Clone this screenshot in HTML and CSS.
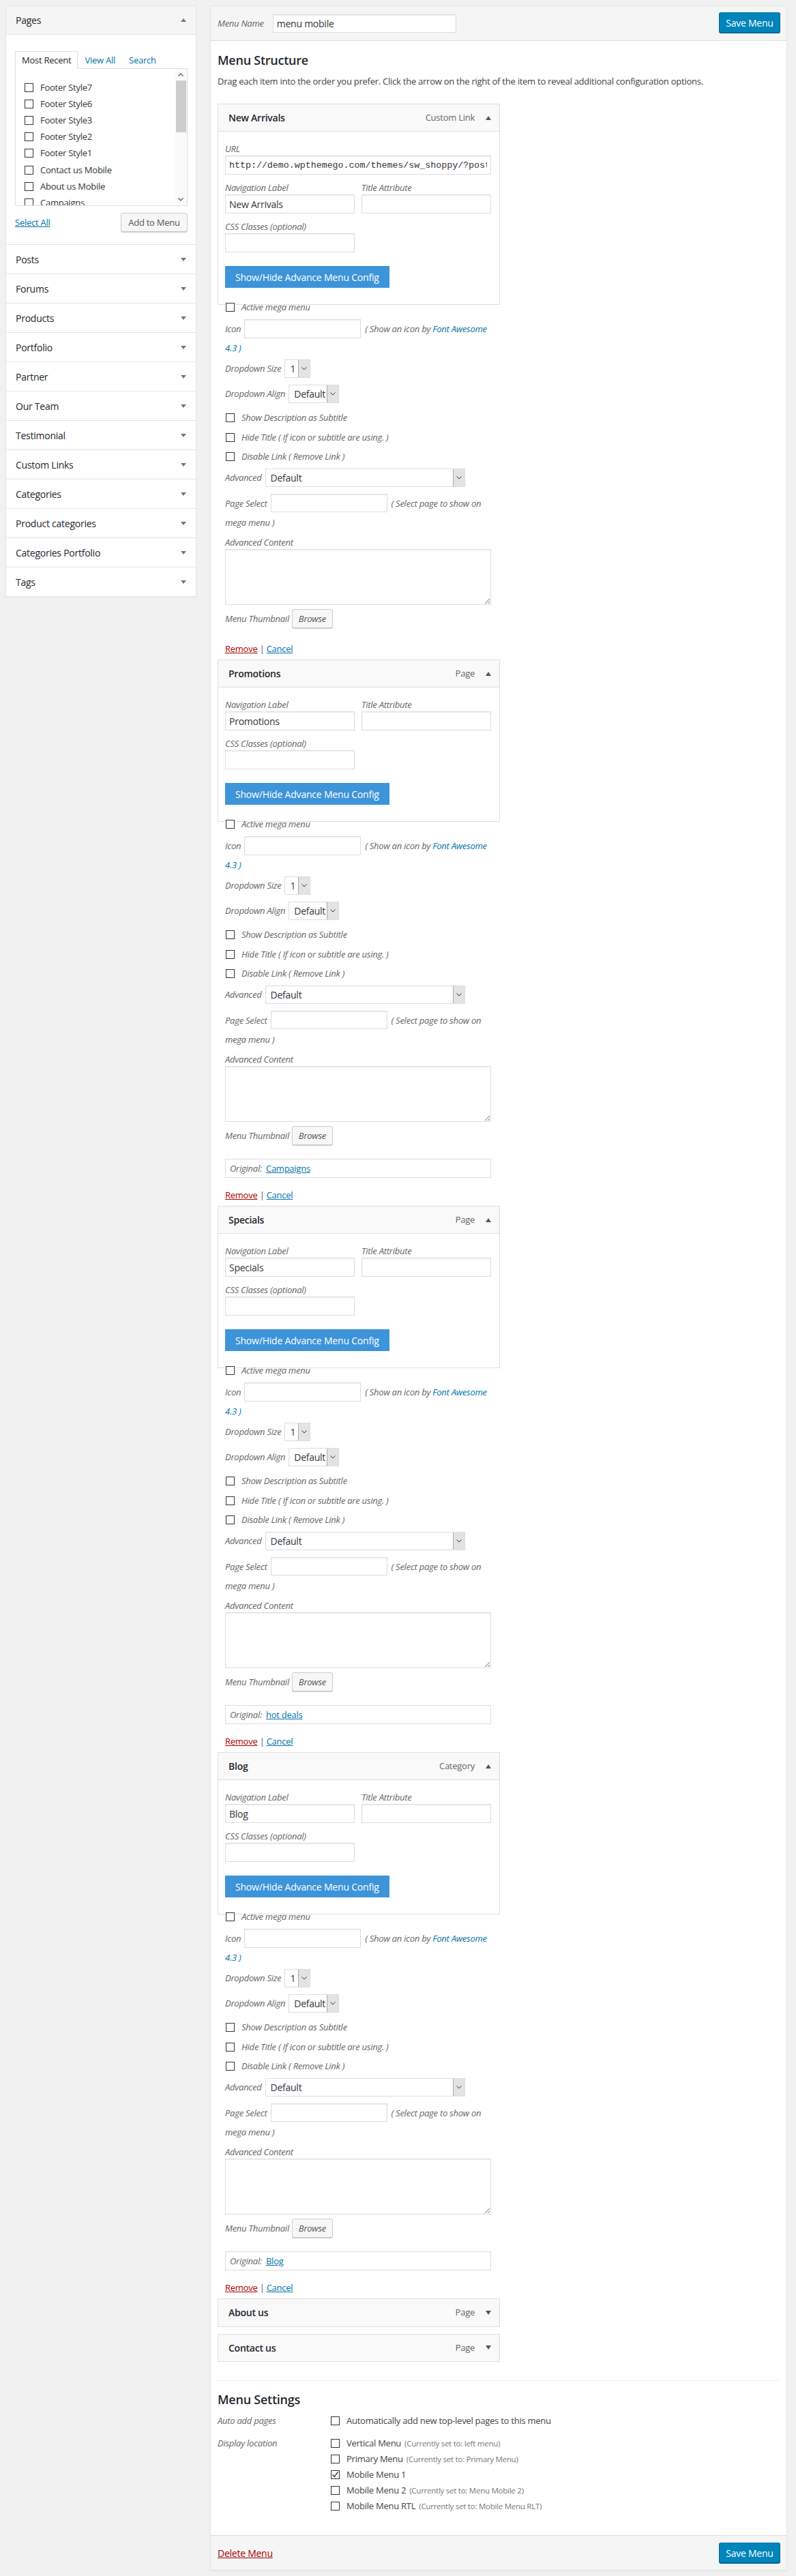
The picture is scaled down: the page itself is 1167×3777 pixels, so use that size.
FILE: index.html
```html
<!DOCTYPE html>
<html lang="en">
<head>
<meta charset="utf-8">
<title>Menus</title>
<link rel="stylesheet" href="styles.css">
</head>
<body>
<div class="wrap">
  <aside class="side">
    <section class="acc open">
      <div class="acc-h"><span>Pages</span><i class="tri up"></i></div>
      <div class="acc-b">
        <ul class="tabs">
          <li class="on">Most Recent</li>
          <li><a href="#">View All</a></li>
          <li><a href="#">Search</a></li>
        </ul>
        <div class="plist">
          <ul class="pitems">
            <li><span class="cb"></span>Footer Style7</li>
            <li><span class="cb"></span>Footer Style6</li>
            <li><span class="cb"></span>Footer Style3</li>
            <li><span class="cb"></span>Footer Style2</li>
            <li><span class="cb"></span>Footer Style1</li>
            <li><span class="cb"></span>Contact us Mobile</li>
            <li><span class="cb"></span>About us Mobile</li>
            <li><span class="cb"></span>Campaigns</li>
          </ul>
          <div class="sbar">
            <span class="sb-btn"><svg width="8" height="5" viewBox="0 0 8 5"><polyline points="0.5,4.5 4,1 7.5,4.5" fill="none" stroke="#555" stroke-width="1.2"/></svg></span>
            <span class="sb-thumb"></span>
            <span class="sb-fill"></span>
            <span class="sb-btn"><svg width="8" height="5" viewBox="0 0 8 5"><polyline points="0.5,0.5 4,4 7.5,0.5" fill="none" stroke="#555" stroke-width="1.2"/></svg></span>
          </div>
        </div>
        <div class="pact">
          <a href="#" class="selall">Select All</a>
          <button class="btn2">Add to Menu</button>
        </div>
      </div>
    </section>
    <section class="acc"><div class="acc-h"><span>Posts</span><i class="tri dn"></i></div></section>
    <section class="acc"><div class="acc-h"><span>Forums</span><i class="tri dn"></i></div></section>
    <section class="acc"><div class="acc-h"><span>Products</span><i class="tri dn"></i></div></section>
    <section class="acc"><div class="acc-h"><span>Portfolio</span><i class="tri dn"></i></div></section>
    <section class="acc"><div class="acc-h"><span>Partner</span><i class="tri dn"></i></div></section>
    <section class="acc"><div class="acc-h"><span>Our Team</span><i class="tri dn"></i></div></section>
    <section class="acc"><div class="acc-h"><span>Testimonial</span><i class="tri dn"></i></div></section>
    <section class="acc"><div class="acc-h"><span>Custom Links</span><i class="tri dn"></i></div></section>
    <section class="acc"><div class="acc-h"><span>Categories</span><i class="tri dn"></i></div></section>
    <section class="acc"><div class="acc-h"><span>Product categories</span><i class="tri dn"></i></div></section>
    <section class="acc"><div class="acc-h"><span>Categories Portfolio</span><i class="tri dn"></i></div></section>
    <section class="acc last"><div class="acc-h"><span>Tags</span><i class="tri dn"></i></div></section>
  </aside>

  <main class="menu">
    <header class="mh">
      <div class="mname"><label class="lbi">Menu Name</label><input class="txt nm" value="menu mobile"></div>
      <button class="save">Save Menu</button>
    </header>

    <div class="mb">
      <h3 class="h3">Menu Structure</h3>
      <p class="desc">Drag each item into the order you prefer. Click the arrow on the right of the item to reveal additional configuration options.</p>

      <ul class="mitems">
        <!-- New Arrivals -->
        <li class="mi">
          <div class="item">
            <div class="ih"><span class="it">New Arrivals</span><span class="ity">Custom Link</span><i class="tri up2"></i></div>
            <div class="ib">
              <label class="lbi blk">URL</label>
              <input class="txt full mono" value="http://demo.wpthemego.com/themes/sw_shoppy/?post_type=product&amp;product_cat=new">
              <div class="two">
                <div><label class="lbi blk">Navigation Label</label><input class="txt half" value="New Arrivals"></div>
                <div><label class="lbi blk">Title Attribute</label><input class="txt half"></div>
              </div>
              <label class="lbi blk mt10">CSS Classes (optional)</label>
              <input class="txt half">
              <button class="bbtn">Show/Hide Advance Menu Config</button>
            </div>
          </div>
          <div class="adv">
            <div class="rchk"><span class="cb"></span><span class="lbi">Active mega menu</span></div>
            <p class="ricon"><span class="lbi">Icon</span><input class="txt sm"><span class="lbi">( Show an icon by <a href="#">Font Awesome</a></span><br><a href="#" class="lbi">4.3 )</a></p>
            <div class="rsel r1"><span class="lbi">Dropdown Size</span><span class="sel s-size"><span class="sv">1</span><span class="sa"><svg width="8" height="5" viewBox="0 0 8 5"><polyline points="0.5,0.5 4,4 7.5,0.5" fill="none" stroke="#333" stroke-width="1"/></svg></span></span></div>
            <div class="rsel r2"><span class="lbi">Dropdown Align</span><span class="sel s-align"><span class="sv">Default</span><span class="sa"><svg width="8" height="5" viewBox="0 0 8 5"><polyline points="0.5,0.5 4,4 7.5,0.5" fill="none" stroke="#333" stroke-width="1"/></svg></span></span></div>
            <div class="rchk c1"><span class="cb"></span><span class="lbi">Show Description as Subtitle</span></div>
            <div class="rchk c2"><span class="cb"></span><span class="lbi">Hide Title ( If icon or subtitle are using. )</span></div>
            <div class="rchk c2"><span class="cb"></span><span class="lbi">Disable Link ( Remove Link )</span></div>
            <div class="rsel r3"><span class="lbi">Advanced</span><span class="sel s-adv"><span class="sv">Default</span><span class="sa"><svg width="8" height="5" viewBox="0 0 8 5"><polyline points="0.5,0.5 4,4 7.5,0.5" fill="none" stroke="#333" stroke-width="1"/></svg></span></span></div>
            <p class="rpage"><span class="lbi">Page Select</span><input class="txt sm"><span class="lbi">( Select page to show on</span><br><span class="lbi">mega menu )</span></p>
            <label class="lbi blk ract">Advanced Content</label>
            <textarea class="ta"></textarea>
            <div class="rthumb"><span class="lbi">Menu Thumbnail</span><button class="btn2 bi">Browse</button></div>
            <div class="ract2 noorig"><a href="#" class="rm">Remove</a> <span class="sep">|</span> <a href="#" class="cc">Cancel</a></div>
          </div>
        </li>

        <!-- Promotions -->
        <li class="mi">
          <div class="item">
            <div class="ih"><span class="it">Promotions</span><span class="ity">Page</span><i class="tri up2"></i></div>
            <div class="ib">
              <div class="two">
                <div><label class="lbi blk">Navigation Label</label><input class="txt half" value="Promotions"></div>
                <div><label class="lbi blk">Title Attribute</label><input class="txt half"></div>
              </div>
              <label class="lbi blk mt10">CSS Classes (optional)</label>
              <input class="txt half">
              <button class="bbtn">Show/Hide Advance Menu Config</button>
            </div>
          </div>
          <div class="adv">
            <div class="rchk"><span class="cb"></span><span class="lbi">Active mega menu</span></div>
            <p class="ricon"><span class="lbi">Icon</span><input class="txt sm"><span class="lbi">( Show an icon by <a href="#">Font Awesome</a></span><br><a href="#" class="lbi">4.3 )</a></p>
            <div class="rsel r1"><span class="lbi">Dropdown Size</span><span class="sel s-size"><span class="sv">1</span><span class="sa"><svg width="8" height="5" viewBox="0 0 8 5"><polyline points="0.5,0.5 4,4 7.5,0.5" fill="none" stroke="#333" stroke-width="1"/></svg></span></span></div>
            <div class="rsel r2"><span class="lbi">Dropdown Align</span><span class="sel s-align"><span class="sv">Default</span><span class="sa"><svg width="8" height="5" viewBox="0 0 8 5"><polyline points="0.5,0.5 4,4 7.5,0.5" fill="none" stroke="#333" stroke-width="1"/></svg></span></span></div>
            <div class="rchk c1"><span class="cb"></span><span class="lbi">Show Description as Subtitle</span></div>
            <div class="rchk c2"><span class="cb"></span><span class="lbi">Hide Title ( If icon or subtitle are using. )</span></div>
            <div class="rchk c2"><span class="cb"></span><span class="lbi">Disable Link ( Remove Link )</span></div>
            <div class="rsel r3"><span class="lbi">Advanced</span><span class="sel s-adv"><span class="sv">Default</span><span class="sa"><svg width="8" height="5" viewBox="0 0 8 5"><polyline points="0.5,0.5 4,4 7.5,0.5" fill="none" stroke="#333" stroke-width="1"/></svg></span></span></div>
            <p class="rpage"><span class="lbi">Page Select</span><input class="txt sm"><span class="lbi">( Select page to show on</span><br><span class="lbi">mega menu )</span></p>
            <label class="lbi blk ract">Advanced Content</label>
            <textarea class="ta"></textarea>
            <div class="rthumb"><span class="lbi">Menu Thumbnail</span><button class="btn2 bi">Browse</button></div>
            <div class="orig"><span class="lbi">Original:</span> <a href="#">Campaigns</a></div>
            <div class="ract2"><a href="#" class="rm">Remove</a> <span class="sep">|</span> <a href="#" class="cc">Cancel</a></div>
          </div>
        </li>

        <!-- Specials -->
        <li class="mi">
          <div class="item">
            <div class="ih"><span class="it">Specials</span><span class="ity">Page</span><i class="tri up2"></i></div>
            <div class="ib">
              <div class="two">
                <div><label class="lbi blk">Navigation Label</label><input class="txt half" value="Specials"></div>
                <div><label class="lbi blk">Title Attribute</label><input class="txt half"></div>
              </div>
              <label class="lbi blk mt10">CSS Classes (optional)</label>
              <input class="txt half">
              <button class="bbtn">Show/Hide Advance Menu Config</button>
            </div>
          </div>
          <div class="adv">
            <div class="rchk"><span class="cb"></span><span class="lbi">Active mega menu</span></div>
            <p class="ricon"><span class="lbi">Icon</span><input class="txt sm"><span class="lbi">( Show an icon by <a href="#">Font Awesome</a></span><br><a href="#" class="lbi">4.3 )</a></p>
            <div class="rsel r1"><span class="lbi">Dropdown Size</span><span class="sel s-size"><span class="sv">1</span><span class="sa"><svg width="8" height="5" viewBox="0 0 8 5"><polyline points="0.5,0.5 4,4 7.5,0.5" fill="none" stroke="#333" stroke-width="1"/></svg></span></span></div>
            <div class="rsel r2"><span class="lbi">Dropdown Align</span><span class="sel s-align"><span class="sv">Default</span><span class="sa"><svg width="8" height="5" viewBox="0 0 8 5"><polyline points="0.5,0.5 4,4 7.5,0.5" fill="none" stroke="#333" stroke-width="1"/></svg></span></span></div>
            <div class="rchk c1"><span class="cb"></span><span class="lbi">Show Description as Subtitle</span></div>
            <div class="rchk c2"><span class="cb"></span><span class="lbi">Hide Title ( If icon or subtitle are using. )</span></div>
            <div class="rchk c2"><span class="cb"></span><span class="lbi">Disable Link ( Remove Link )</span></div>
            <div class="rsel r3"><span class="lbi">Advanced</span><span class="sel s-adv"><span class="sv">Default</span><span class="sa"><svg width="8" height="5" viewBox="0 0 8 5"><polyline points="0.5,0.5 4,4 7.5,0.5" fill="none" stroke="#333" stroke-width="1"/></svg></span></span></div>
            <p class="rpage"><span class="lbi">Page Select</span><input class="txt sm"><span class="lbi">( Select page to show on</span><br><span class="lbi">mega menu )</span></p>
            <label class="lbi blk ract">Advanced Content</label>
            <textarea class="ta"></textarea>
            <div class="rthumb"><span class="lbi">Menu Thumbnail</span><button class="btn2 bi">Browse</button></div>
            <div class="orig"><span class="lbi">Original:</span> <a href="#">hot deals</a></div>
            <div class="ract2"><a href="#" class="rm">Remove</a> <span class="sep">|</span> <a href="#" class="cc">Cancel</a></div>
          </div>
        </li>

        <!-- Blog -->
        <li class="mi">
          <div class="item">
            <div class="ih"><span class="it">Blog</span><span class="ity">Category</span><i class="tri up2"></i></div>
            <div class="ib">
              <div class="two">
                <div><label class="lbi blk">Navigation Label</label><input class="txt half" value="Blog"></div>
                <div><label class="lbi blk">Title Attribute</label><input class="txt half"></div>
              </div>
              <label class="lbi blk mt10">CSS Classes (optional)</label>
              <input class="txt half">
              <button class="bbtn">Show/Hide Advance Menu Config</button>
            </div>
          </div>
          <div class="adv">
            <div class="rchk"><span class="cb"></span><span class="lbi">Active mega menu</span></div>
            <p class="ricon"><span class="lbi">Icon</span><input class="txt sm"><span class="lbi">( Show an icon by <a href="#">Font Awesome</a></span><br><a href="#" class="lbi">4.3 )</a></p>
            <div class="rsel r1"><span class="lbi">Dropdown Size</span><span class="sel s-size"><span class="sv">1</span><span class="sa"><svg width="8" height="5" viewBox="0 0 8 5"><polyline points="0.5,0.5 4,4 7.5,0.5" fill="none" stroke="#333" stroke-width="1"/></svg></span></span></div>
            <div class="rsel r2"><span class="lbi">Dropdown Align</span><span class="sel s-align"><span class="sv">Default</span><span class="sa"><svg width="8" height="5" viewBox="0 0 8 5"><polyline points="0.5,0.5 4,4 7.5,0.5" fill="none" stroke="#333" stroke-width="1"/></svg></span></span></div>
            <div class="rchk c1"><span class="cb"></span><span class="lbi">Show Description as Subtitle</span></div>
            <div class="rchk c2"><span class="cb"></span><span class="lbi">Hide Title ( If icon or subtitle are using. )</span></div>
            <div class="rchk c2"><span class="cb"></span><span class="lbi">Disable Link ( Remove Link )</span></div>
            <div class="rsel r3"><span class="lbi">Advanced</span><span class="sel s-adv"><span class="sv">Default</span><span class="sa"><svg width="8" height="5" viewBox="0 0 8 5"><polyline points="0.5,0.5 4,4 7.5,0.5" fill="none" stroke="#333" stroke-width="1"/></svg></span></span></div>
            <p class="rpage"><span class="lbi">Page Select</span><input class="txt sm"><span class="lbi">( Select page to show on</span><br><span class="lbi">mega menu )</span></p>
            <label class="lbi blk ract">Advanced Content</label>
            <textarea class="ta"></textarea>
            <div class="rthumb"><span class="lbi">Menu Thumbnail</span><button class="btn2 bi">Browse</button></div>
            <div class="orig"><span class="lbi">Original:</span> <a href="#">Blog</a></div>
            <div class="ract2"><a href="#" class="rm">Remove</a> <span class="sep">|</span> <a href="#" class="cc">Cancel</a></div>
          </div>
        </li>

        <li class="mi">
          <div class="item closed">
            <div class="ih"><span class="it">About us</span><span class="ity">Page</span><i class="tri dn2"></i></div>
          </div>
        </li>
        <li class="mi">
          <div class="item closed">
            <div class="ih"><span class="it">Contact us</span><span class="ity">Page</span><i class="tri dn2"></i></div>
          </div>
        </li>
      </ul>

      <div class="settings">
        <h3 class="h3">Menu Settings</h3>
        <div class="srow auto">
          <div class="slab lbi">Auto add pages</div>
          <div class="sopts">
            <div class="opt"><span class="cb"></span>Automatically add new top-level pages to this menu</div>
          </div>
        </div>
        <div class="srow disp">
          <div class="slab lbi">Display location</div>
          <div class="sopts">
            <div class="opt"><span class="cb"></span>Vertical Menu <small>(Currently set to: left menu)</small></div>
            <div class="opt"><span class="cb"></span>Primary Menu <small>(Currently set to: Primary Menu)</small></div>
            <div class="opt"><span class="cb on"><svg width="11" height="11" viewBox="0 0 11 11"><polyline points="1.5,5.5 4,8.5 9.5,1.5" fill="none" stroke="#333" stroke-width="1.4"/></svg></span>Mobile Menu 1</div>
            <div class="opt"><span class="cb"></span>Mobile Menu 2 <small>(Currently set to: Menu Mobile 2)</small></div>
            <div class="opt"><span class="cb"></span>Mobile Menu RTL <small>(Currently set to: Mobile Menu RLT)</small></div>
          </div>
        </div>
      </div>
    </div>

    <footer class="mf">
      <a href="#" class="del">Delete Menu</a>
      <button class="save">Save Menu</button>
    </footer>
  </main>
</div>
</body>
</html>
```

FILE: styles.css
```css
* { box-sizing: border-box; }
html, body { margin: 0; padding: 0; }
body {
  background: #f1f1f1;
  font-family: "Open Sans", "Noto Sans", sans-serif;
  font-size: 13px;
  line-height: 19px;
  color: #444;
  letter-spacing: -0.25px;
}
a { color: #0073aa; }
ul { list-style: none; margin: 0; padding: 0; }
p { margin: 0; }
button, input, textarea { font-family: inherit; letter-spacing: inherit; }

.wrap {
  display: flex;
  align-items: flex-start;
  gap: 20px;
  padding: 8px 13px 15px 8px;
}

/* ---------- Sidebar ---------- */
.side {
  flex: none;
  width: 280px;
  background: #fff;
  border: 1px solid #e5e5e5;
  box-shadow: 0 1px 1px rgba(0,0,0,.04);
}
.acc { border-bottom: 1px solid #e5e5e5; }
.acc.last { border-bottom: 0; }
.acc-h {
  height: 42px;
  display: flex;
  align-items: center;
  justify-content: space-between;
  padding: 0 14px 0 14px;
  font-size: 14px;
  color: #23282d;
}
.acc.open .acc-h {
  box-sizing: content-box;
  height: 41px;
  background: #f5f5f5;
  border-bottom: 1px solid #e5e5e5;
}
.tri { display: block; width: 0; height: 0; border-left: 4px solid transparent; border-right: 4px solid transparent; }
.tri.dn { border-top: 5px solid #72777c; }
.tri.up { border-bottom: 5px solid #72777c; }
.tri.up2 { border-bottom: 6px solid #555; }
.tri.dn2 { border-top: 6px solid #555; }

.acc-b { padding: 24px 12px 18px 13px; }
.tabs { display: flex; height: 25px; }
.tabs li {
  padding: 0 9px;
  line-height: 25px;
  height: 25px;
  border: 1px solid transparent;
  border-bottom: 0;
}
.tabs li a { text-decoration: none; }
.tabs li.on {
  position: relative;
  z-index: 1;
  background: #fff;
  border-color: #ddd;
  height: 26px;
  color: #23282d;
}
.plist {
  display: flex;
  height: 202px;
  border: 1px solid #ddd;
  background: #fff;
  overflow: hidden;
}
.pitems {
  flex: 1;
  padding: 15px 0 0 13px;
  overflow: hidden;
}
.pitems li {
  display: flex;
  align-items: center;
  height: 24.2px;
  color: #32373c;
}
.cb {
  flex: none;
  display: inline-flex;
  align-items: center;
  justify-content: center;
  width: 13px;
  height: 13px;
  border: 1px solid #333;
  background: #fff;
}
.pitems .cb { margin-right: 10px; }
.sbar {
  flex: none;
  width: 17px;
  display: flex;
  flex-direction: column;
  align-items: center;
  background: #fafafa;
  padding: 0 1px 0 0;
}
.sb-btn { height: 17px; width: 15px; display: flex; align-items: center; justify-content: center; }
.sb-thumb { width: 15px; height: 76px; background: #cdcdcd; }
.sb-fill { flex: 1; }

.pact {
  display: flex;
  justify-content: space-between;
  align-items: center;
  margin-top: 10px;
}
.selall { font-size: 13px; }
.btn2 {
  height: 28px;
  padding: 0 10px;
  font-size: 13px;
  color: #555;
  background: #f7f7f7;
  border: 1px solid #ccc;
  border-radius: 3px;
  box-shadow: 0 1px 0 #ccc;
}
.pact .btn2 { width: 98px; margin-right: 0; }

/* ---------- Main ---------- */
.menu {
  flex: none;
  width: 846px;
  background: #fff;
  border: 1px solid #e5e5e5;
  box-shadow: 0 1px 1px rgba(0,0,0,.04);
}
.mh, .mf {
  display: flex;
  align-items: center;
  justify-content: space-between;
  background: #f5f5f5;
  padding: 0 9px 0 10px;
}
.mh { height: 51px; border-bottom: 1px solid #dfdfdf; }
.mf { height: 51px; border-top: 1px solid #dfdfdf; }
.mname { display: flex; align-items: center; }
.lbi { font-style: italic; color: #666; }
.lbi a { color: #0073aa; text-decoration: none; }
a.lbi { color: #0073aa; text-decoration: none; }
.blk { display: block; }
.txt {
  height: 28px;
  padding: 2px 5px;
  border: 1px solid #ddd;
  box-shadow: inset 0 1px 2px rgba(0,0,0,.07);
  background: #fff;
  color: #32373c;
  font-size: 14px;
  outline: none;
}
.nm { width: 269px; height: 27px; margin-left: 13px; }
.save {
  height: 30px;
  width: 90px;
  padding: 0;
  font-size: 14px;
  color: #fff;
  background: #0085ba;
  border: 1px solid #0073aa;
  border-color: #0073aa #006799 #006799;
  border-radius: 3px;
  box-shadow: 0 1px 0 #006799;
  margin-top: -2px;
}

.mb { padding: 0 10px; }
.h3 {
  margin: 16px 0 0;
  font-size: 18px;
  line-height: 24px;
  font-weight: 600;
  color: #23282d;
}
.desc { margin-top: 10px; }
.mitems { margin-top: 23px; width: 414px; }

.item {
  border: 1px solid #dfdfdf;
  background: #fff;
}
.ih {
  height: 40px;
  display: flex;
  align-items: center;
  padding: 0 12px 0 15px;
  background: #f9f9f9;
  border-bottom: 1px solid #dfdfdf;
}
.it { flex: 1; font-size: 14px; font-weight: 600; color: #23282d; }
.ity { color: #666; margin-right: 16px; }
.item.closed .ih { border-bottom: 0; height: 39.5px; }
.item.closed { margin-bottom: 10px; }

.ib { padding: 16px 12px 24px 10px; }
.full { width: 390px; display: block; }
.mono { font-family: "Liberation Mono", monospace; font-size: 13.3px; letter-spacing: 0; }
.two {
  display: grid;
  grid-template-columns: 190px 190px;
  column-gap: 10px;
  margin-top: 10px;
}
.ib > .two:first-child { margin-top: 0; }
.half { width: 190px; display: block; }
.mt10 { margin-top: 10px; }
.bbtn {
  display: block;
  margin-top: 20px;
  height: 32px;
  padding: 0 15px;
  border: 0;
  background: #3d94d9;
  color: #fff;
  font-size: 14px;
  letter-spacing: -0.2px;
}

.adv { padding-left: 11px; margin-top: -6px; }
.rchk { display: flex; align-items: center; height: 19px; }
.rchk .cb { margin: 0 10px 0 1px; }
.ricon { margin-top: 8px; line-height: 28px; }
.ricon .txt, .rpage .txt { vertical-align: top; }
.sm { width: 171px; height: 28px; margin: 0 6px 0 5px; }
.rsel { display: flex; align-items: center; }
.rsel .lbi { margin-right: 5px; }
.r1 { margin-top: 3px; height: 27px; }
.r2 { margin-top: 10px; height: 27px; }
.r3 { margin-top: 8px; height: 27px; }
.c1 { margin-top: 12px; }
.c2 { margin-top: 9.5px; }
.sel {
  display: flex;
  height: 27px;
  border: 1px solid #ddd;
  background: #fff;
  color: #32373c;
  font-size: 14px;
}
.sv { flex: 1; padding-left: 7px; line-height: 25px; }
.sa {
  flex: none;
  width: 17px;
  display: flex;
  align-items: center;
  justify-content: center;
  background: #e3e3e3;
  border-left: 1px solid #aaa;
}
.s-size { width: 38px; }
.s-align { width: 74px; }
.s-adv { width: 293px; }
.rpage { margin-top: 10px; line-height: 28px; }
.rpage .txt { height: 27px; }
.ract { margin-top: 6px; }
.ta {
  display: block;
  width: 390px;
  height: 82px;
  border: 1px solid #ddd;
  box-shadow: inset 0 1px 2px rgba(0,0,0,.07);
  resize: vertical;
}
.rthumb { display: flex; align-items: center; margin-top: 6px; height: 28px; }
.rthumb .lbi { margin-right: 4px; }
.bi { font-style: italic; width: 60px; padding: 0; }
.orig {
  margin-top: 20px;
  width: 390px;
  height: 28px;
  border: 1px solid #ddd;
  padding: 0 6px;
  display: flex;
  align-items: center;
  gap: 6px;
}
.ract2 { margin-top: 16px; height: 19px; margin-bottom: 6px; font-size: 13px; }
.ract2.noorig { margin-top: 21px; }
.rm { color: #a00; }
.cc { color: #0073aa; }
.sep { color: #555; }

.settings {
  margin-top: 27px;
  border-top: 1px solid #eee;
  padding-bottom: 29px;
}
.settings .h3 { margin-top: 15px; }
.srow { display: flex; }
.srow.auto { margin-top: 10px; }
.srow.disp { margin-top: 14px; }
.slab { width: 166px; flex: none; }
.opt { display: flex; align-items: center; height: 19px; margin-bottom: 4px; color: #444; }
.opt .cb { margin-right: 10px; }
.opt small { font-size: 11.5px; color: #777; margin-left: 5px; }
.srow.auto .opt { margin-bottom: 0; }

.del { color: #a00; font-size: 14px; }
.mf .save { margin-top: 0; }
```
